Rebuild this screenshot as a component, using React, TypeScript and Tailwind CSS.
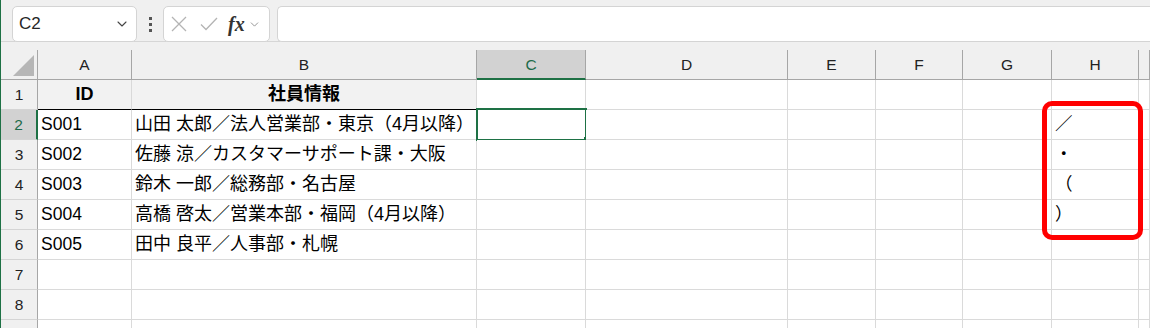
import { ChevronDown } from "lucide-react";

const columns = ["A", "B", "C", "D", "E", "F", "G", "H", "I"];

type Row = {
  a?: string;
  b?: string;
  h?: string;
  head?: boolean;
};

const rows: Row[] = [
  { a: "ID", b: "社員情報", head: true },
  { a: "S001", b: "山田 太郎／法人営業部・東京（4月以降）", h: "／" },
  { a: "S002", b: "佐藤 涼／カスタマーサポート課・大阪", h: "・" },
  { a: "S003", b: "鈴木 一郎／総務部・名古屋", h: "（" },
  { a: "S004", b: "高橋 啓太／営業本部・福岡（4月以降）", h: "）" },
  { a: "S005", b: "田中 良平／人事部・札幌" },
  {},
  {},
  {},
];

const FormulaBar = () => (
  <div className="flex h-[42px] items-start gap-[7px] border-b border-[#d6d6d6] bg-[#f0f0f0] pl-[11px] pt-[6px]">
    {/* Name box */}
    <div className="flex h-[36px] w-[125px] items-center justify-between rounded-[5px] border border-[#d4d4d4] bg-white pl-[6px] pr-[6px]">
      <span className="text-[17px] text-[#262626]">C2</span>
      <ChevronDown className="h-[16px] w-[16px] text-[#444]" strokeWidth={1.6} />
    </div>
    <div className="flex h-[36px] w-[12px] flex-col items-center justify-center gap-[3px]">
      <span className="h-[3px] w-[3px] bg-[#555]" />
      <span className="h-[3px] w-[3px] bg-[#555]" />
      <span className="h-[3px] w-[3px] bg-[#555]" />
    </div>
    {/* Cancel / enter / fx */}
    <div className="flex h-[36px] w-[107px] items-center rounded-[5px] border border-[#d4d4d4] bg-white pl-[7px]">
      <svg width="16" height="16" viewBox="0 0 16 16" className="mr-[13px]">
        <path d="M1 1 L15 15 M15 1 L1 15" stroke="#b4b4b4" strokeWidth="1.3" fill="none" />
      </svg>
      <svg width="18" height="16" viewBox="0 0 18 16" className="mr-[10px]">
        <path d="M1 8.5 L6 13.5 L17 2" stroke="#b4b4b4" strokeWidth="1.3" fill="none" />
      </svg>
      <span className="font-['Liberation_Serif',serif] text-[20px] font-bold italic leading-none text-[#333]">fx</span>
      <ChevronDown className="ml-[3px] h-[13px] w-[13px] text-[#888]" strokeWidth={1.6} />
    </div>
    {/* Formula input */}
    <div className="h-[36px] flex-1 rounded-l-[5px] border border-r-0 border-[#d4d4d4] bg-white" />
  </div>
);

const HeaderRow = () => (
  <>
    <div className="relative h-[30px] border-b border-r border-[#a6a6a6] bg-[#f0f0f0]">
      <div className="absolute bottom-[3px] right-[3px] h-0 w-0 border-b-[21px] border-l-[21px] border-b-[#b6b6b6] border-l-transparent" />
    </div>
    {columns.map((c) =>
      c === "C" ? (
        <div
          key={c}
          className="flex h-[30px] items-center justify-center border-b-2 border-r border-b-[#1e7145] border-r-[#a6a6a6] bg-[#d2d2d2] pt-[1px] text-[15.5px] text-[#1e6b4a]"
        >
          {c}
        </div>
      ) : (
        <div
          key={c}
          className="flex h-[30px] items-center justify-center overflow-hidden border-b border-r border-[#a6a6a6] bg-[#f0f0f0] text-[15.5px] text-[#222]"
        >
          {c === "I" ? "" : c}
        </div>
      )
    )}
  </>
);

const DataRow = ({ row, index }: { row: Row; index: number }) => {
  const n = index + 1;
  const selected = n === 2;
  return (
    <>
      {selected ? (
        <div className="flex h-[30px] items-center justify-center border-b border-r-2 border-b-[#d4d4d4] border-r-[#1e7145] bg-[#d2d2d2] text-[15.5px] text-[#1e6b4a]">
          {n}
        </div>
      ) : (
        <div className="flex h-[30px] items-center justify-center border-b border-r border-b-[#d4d4d4] border-r-[#a6a6a6] bg-[#f0f0f0] text-[15.5px] text-[#222]">
          {n < 9 ? n : ""}
        </div>
      )}
      {columns.map((c) => {
        if (row.head && (c === "A" || c === "B")) {
          return (
            <div
              key={c}
              className="flex h-[30px] items-center justify-center border-b border-r border-b-black border-r-[#d9d9d9] bg-[#f2f2f2] text-[18px] font-bold text-black"
            >
              {c === "A" ? row.a : row.b}
            </div>
          );
        }
        if (c === "B") {
          return (
            <div
              key={c}
              className="flex h-[30px] items-center whitespace-nowrap border-b border-r border-[#dadada] bg-white pl-[3px] text-[18px] text-black"
            >
              {row.b}
            </div>
          );
        }
        const text = c === "A" ? row.a : c === "H" ? row.h : undefined;
        return (
          <div
            key={c}
            className="relative flex h-[30px] items-center whitespace-nowrap border-b border-r border-[#dadada] bg-white pl-[3px] text-[17.5px] text-black"
          >
            {text}
            {selected && c === "C" && (
              <>
                <div className="absolute left-[-1px] top-[-2px] h-[33px] w-[111px] border-2 border-[#1e7145]" />
                <div className="absolute bottom-[-3px] right-[-4px] h-[5px] w-[5px] bg-[#1e7145]" />
              </>
            )}
          </div>
        );
      })}
    </>
  );
};

export default function App() {
  return (
    <div className="relative h-[328px] w-[1150px] overflow-hidden border-l border-[#1e7145] bg-white font-['Liberation_Sans','Noto_Sans_CJK_JP',sans-serif]">
      <FormulaBar />
      <div className="h-[8px] bg-[#f0f0f0]" />
      <div className="grid grid-cols-[37px_94px_345px_109px_202px_88px_87px_89px_87px_1fr]">
        <HeaderRow />
        {rows.map((row, i) => (
          <DataRow key={i} row={row} index={i} />
        ))}
      </div>
      {/* annotation box */}
      <div className="absolute left-[1041px] top-[101px] h-[139px] w-[101px] rounded-[10px] border-[5px] border-[#ff0000]" />
    </div>
  );
}
